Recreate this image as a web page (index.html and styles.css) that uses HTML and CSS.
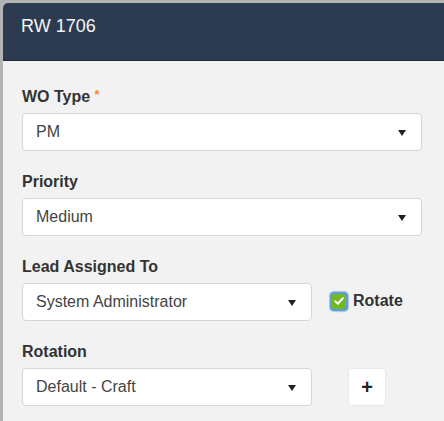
FILE: index.html
```html
<!DOCTYPE html>
<html>
<head>
<meta charset="utf-8">
<link rel="stylesheet" href="styles.css">
</head>
<body>
<div class="panel">
  <div class="panel-header">
    <h1 class="title">RW 1706</h1>
  </div>
  <div class="panel-body">
    <div class="form-group">
      <label class="field-label">WO Type <span class="req">*</span></label>
      <div class="select"><span class="select-text">PM</span><span class="caret"></span></div>
    </div>
    <div class="form-group">
      <label class="field-label">Priority</label>
      <div class="select"><span class="select-text">Medium</span><span class="caret"></span></div>
    </div>
    <div class="form-group">
      <label class="field-label">Lead Assigned To</label>
      <div class="row">
        <div class="select"><span class="select-text">System Administrator</span><span class="caret"></span></div>
        <div class="check">
          <span class="checkbox"><svg viewBox="0 0 14 14" width="12" height="12"><path d="M2.5 7.2 L5.6 10.2 L11.5 3.8" fill="none" stroke="#fff" stroke-width="2.2" stroke-linecap="round" stroke-linejoin="round"/></svg></span>
          <span class="check-label">Rotate</span>
        </div>
      </div>
    </div>
    <div class="form-group">
      <label class="field-label">Rotation</label>
      <div class="row">
        <div class="select"><span class="select-text">Default - Craft</span><span class="caret"></span></div>
        <div class="btn-cell"><button class="add-btn">+</button></div>
      </div>
    </div>
  </div>
</div>
</body>
</html>
```

FILE: styles.css
```css
html, body {
  margin: 0;
  padding: 0;
}
body {
  background: #b4b4b4;
  font-family: "Liberation Sans", Arial, sans-serif;
  width: 444px;
  height: 421px;
  overflow: hidden;
  padding: 3px 0 0 3px;
  box-sizing: border-box;
}
.panel {
  width: 441px;
  height: 418px;
  background: #f2f2f2;
  border-radius: 5px 0 0 0;
  overflow: hidden;
}
.panel-header {
  background: #2c3b4f;
  height: 57px;
  border-bottom: 1px solid #1d2a38;
  box-sizing: content-box;
}
.title {
  margin: 0;
  padding: 11px 0 0 18px;
  font-size: 18px;
  font-weight: normal;
  line-height: 24px;
  color: #f4f6f8;
}
.panel-body {
  padding: 25px 0 0 19px;
  width: 400px;
}
.form-group {
  margin-bottom: 20px;
}
.field-label {
  display: block;
  font-size: 16px;
  font-weight: bold;
  color: #333;
  line-height: 21px;
  height: 21px;
  margin-bottom: 6px;
}
.req {
  color: #f08a3c;
  font-size: 13px;
  line-height: 0;
  vertical-align: 3px;
}
.select {
  height: 38px;
  box-sizing: border-box;
  background: #fff;
  border: 1px solid #d6d6d6;
  border-radius: 4px;
  display: flex;
  align-items: center;
  justify-content: space-between;
  padding: 0 15px 0 13px;
}
.select-text {
  font-size: 16px;
  color: #444;
}
.caret {
  width: 0;
  height: 0;
  border-left: 4px solid transparent;
  border-right: 4px solid transparent;
  border-top: 6px solid #222;
  margin-top: 1px;
}
.row {
  display: grid;
  grid-template-columns: 290px auto;
  align-items: center;
}
.check {
  display: flex;
  align-items: center;
  margin-left: 18px;
  margin-top: -2px;
}
.checkbox {
  width: 18px;
  height: 19px;
  box-sizing: border-box;
  border: 2px solid #5d9fd9;
  border-radius: 4px;
  background: #74b820;
  display: flex;
  align-items: center;
  justify-content: center;
  box-shadow: 0 0 1px 1px rgba(93,159,217,0.5);
}
.check-label {
  font-size: 16px;
  font-weight: bold;
  color: #333;
  margin-left: 5px;
}
.btn-cell {
  padding-left: 36px;
}
.add-btn {
  width: 38px;
  height: 38px;
  background: #fff;
  border: 1px solid #e8e8e8;
  border-radius: 4px;
  font-family: "Liberation Sans", Arial, sans-serif;
  font-size: 20px;
  font-weight: bold;
  color: #222;
  padding: 0;
  line-height: 1;
  display: flex;
  align-items: center;
  justify-content: center;
}
```
